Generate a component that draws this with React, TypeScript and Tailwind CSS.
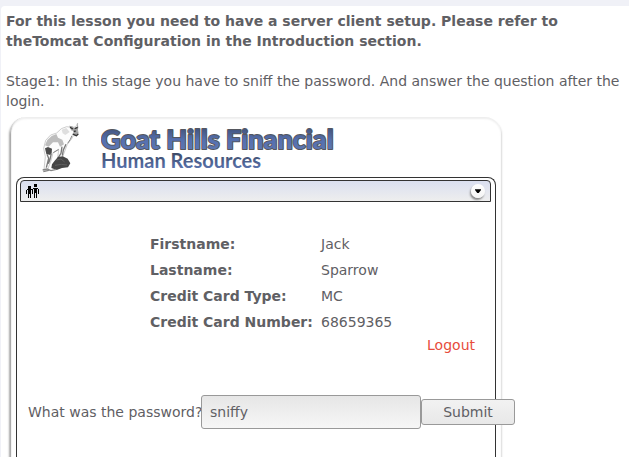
import { useState } from "react";

const employee = [
  { label: "Firstname:", value: "Jack" },
  { label: "Lastname:", value: "Sparrow" },
  { label: "Credit Card Type:", value: "MC" },
  { label: "Credit Card Number:", value: "68659365" },
];

function GoatLogo() {
  return (
    <svg viewBox="0 0 150 168" className="h-14 w-[50px] shrink-0" aria-hidden="true">
      <path
        d="M106 25 L92 23 L76 29 L62 42 L44 48 L29 64 L23 88 L28 113 L24 151 L34 154 L46 122 L51 101 L68 92 L65 116 L57 137 L66 144 L80 113 L94 76 L106 61 L112 50 L123 50 L127 42 L124 31 L125 12 L119 24 Z"
        fill="#fcfcfc"
        stroke="#b5b5b5"
        strokeWidth="2"
      />
      <path d="M47 51 L61 45 L66 56 L79 62 L84 76 L72 83 L66 70 L51 70 L38 83 L27 79 L34 63 Z" fill="#bdbdbd" />
      <path d="M77 32 L91 27 L101 39 L88 48 L80 43 Z" fill="#dedede" />
      <path d="M27 88 L36 84 L48 89 L47 101 L43 108 L31 105 Z" fill="#4b4b4b" />
      <path d="M33 106 L38 118 L31 146 M46 103 L42 121 L37 134 M78 83 L75 103 L65 119 M90 76 L82 93 L79 110" fill="none" stroke="#777" strokeWidth="4" />
      <path d="M48 136 L56 125 L66 114 L80 112 L95 119 L103 133 L96 145 L78 147 L62 153 L46 147 Z" fill="#464646" />
      <path d="M61 123 L75 120 L86 129 M57 139 L76 136 L93 138" fill="none" stroke="#606060" strokeWidth="3" />
      <path d="M20 153 L33 150 L45 155 L61 151 M22 158 L38 154" fill="none" stroke="#858585" strokeWidth="4" />
      <path d="M104 27 L99 20 L109 22 L115 28 L123 25 L125 12 L127 25 L125 37 L127 43 L121 52 L110 47 L114 37 L105 34 Z" fill="#a4a4a4" />
      <path d="M102 25 L111 30 M116 29 L125 25 M110 45 L121 50 L127 45 M113 38 L119 36" fill="none" stroke="#343434" strokeWidth="4" />
      <path d="M95 73 L103 61 L108 50 M52 101 L68 91" fill="none" stroke="#858585" strokeWidth="3" />
    </svg>
  );
}

function Wordmark() {
  return (
    <svg className="h-14 w-60 shrink-0" role="img" aria-label="Goat Hills Financial Human Resources">
      <defs>
        <linearGradient id="brand" x1="0" y1="0" x2="0" y2="1">
          <stop offset="0.2" stopColor="#43557f" />
          <stop offset="0.55" stopColor="#5570b0" />
          <stop offset="1" stopColor="#6079b2" />
        </linearGradient>
        <linearGradient id="department" x1="0" y1="0" x2="0" y2="1">
          <stop offset="0.2" stopColor="#3d4964" />
          <stop offset="1" stopColor="#607cbf" />
        </linearGradient>
      </defs>
      <text
        x="0"
        y="30"
        fontSize="27"
        fontWeight="900"
        fill="url(#brand)"
        stroke="#55575f"
        strokeWidth="2"
        strokeLinejoin="round"
        paintOrder="stroke"
        className="font-[Lato,sans-serif]"
      >
        Goat Hills Financial
      </text>
      <text x="0" y="49" fontSize="20" fontWeight="700" fill="url(#department)" className="font-[Lato,sans-serif]">
        Human Resources
      </text>
    </svg>
  );
}

function PeopleIcon() {
  return (
    <svg viewBox="0 0 13 14" className="h-3.5 w-[13px]" shapeRendering="crispEdges" aria-hidden="true">
      <path d="M2 2h3v3H2z M8 0h3v3H8z M1 5h5v1H1z M0 6h1v4H0z M2 6h3v4H2z M6 6h1v4H6z M2 10h1v4H2z M4 10h1v4H4z M7 4h5v1H7z M6 5h1v4H6z M8 5h3v4H8z M12 5h1v5H12z M8 9h1v5H8z M10 9h1v5H10z" />
    </svg>
  );
}

export default function App() {
  const [answer, setAnswer] = useState("sniffy");

  return (
    <div className="flex min-h-screen flex-col bg-[#f0f1f7] pt-1.5 pl-px font-['DejaVu_Sans',sans-serif] text-sm leading-5 text-[#5f6064]">
      <main className="flex flex-1 flex-col rounded-tl bg-white pt-[5px] pl-[5px]">
        <p className="font-bold">
          For this lesson you need to have a server client setup. Please refer to theTomcat Configuration in the
          Introduction section.
        </p>
        <p className="mt-5">
          Stage1: In this stage you have to sniff the password. And answer the question after the login.
        </p>

        <section className="mt-1.5 ml-1 flex w-full max-w-[491px] flex-1 flex-col rounded-t-2xl bg-white px-1.5 pr-[5px] shadow-[inset_0_2px_2px_#eee,inset_2px_0_1px_-1px_#888,-1px_2px_2px_#aaa,1px_2px_2px_#ddd]">
          <header className="flex h-[60px] items-start pt-0.5 pl-5">
            <GoatLogo />
            <div className="pl-[15px]">
              <Wordmark />
            </div>
          </header>

          <div className="flex flex-1 flex-col rounded-t-lg border border-b-0 border-[#333] pt-0.5 pr-1 pl-[3px]">
            <div className="flex h-[22px] items-center justify-between rounded-t border border-[#333] bg-linear-to-b from-[#dadff0] to-[#eeeeee] px-[5px]">
              <PeopleIcon />
              <button
                type="button"
                aria-label="Window options"
                className="flex size-3.5 items-center justify-center rounded-full bg-linear-to-b from-white to-[#f4f4f4] shadow-[-1px_2px_2px_#888]"
              >
                <svg viewBox="0 0 8 5" className="h-1 w-1.5" aria-hidden="true">
                  <path d="M0 0h8v1L5 5H3L0 1z" />
                </svg>
              </button>
            </div>

            <table className="mt-[29px] ml-[130px] self-start text-left">
              <tbody>
                {employee.map((item) => (
                  <tr key={item.label} className="h-[26px]">
                    <th scope="row" className="w-[171px] p-0 font-bold whitespace-nowrap">
                      {item.label}
                    </th>
                    <td className="p-0">{item.value}</td>
                  </tr>
                ))}
              </tbody>
            </table>
            <a href="#logout" className="mr-4 self-end text-[#e74c3c]">
              Logout
            </a>

            <form className="mt-10 ml-2 flex items-center" onSubmit={(event) => event.preventDefault()}>
              <label htmlFor="password" className="w-[173px] shrink-0 whitespace-nowrap">
                What was the password?
              </label>
              <input
                id="password"
                type="text"
                value={answer}
                onChange={(event) => setAnswer(event.target.value)}
                className="h-[34px] w-[220px] shrink-0 rounded-[3px] border border-[#999] bg-linear-to-b from-[#e6e6e6] to-[#f6f6f6] px-2 outline-none"
              />
              <button
                type="submit"
                className="h-[26px] w-[94px] shrink-0 rounded-[3px] border border-[#999] bg-linear-to-b from-[#f2f2f2] to-[#e8e8e8]"
              >
                Submit
              </button>
            </form>
          </div>
        </section>
      </main>
    </div>
  );
}
